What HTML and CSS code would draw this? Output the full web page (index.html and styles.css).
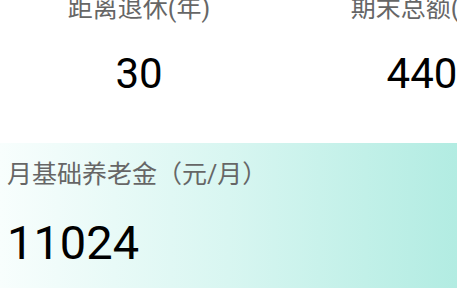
FILE: index.html
```html
<!DOCTYPE html>
<html lang="zh-CN">
<head>
<meta charset="utf-8">
<link rel="stylesheet" href="styles.css">
</head>
<body>
<div class="page">
  <div class="stats">
    <div class="stat stat-left">
      <div class="stat-label">距离退休(年)</div>
      <div class="stat-value">30</div>
    </div>
    <div class="stat stat-right">
      <div class="stat-label">期末总额(元)</div>
      <div class="stat-value">440</div>
    </div>
  </div>
  <div class="card">
    <div class="card-label">月基础养老金（元/月）</div>
    <div class="card-value">11024</div>
  </div>
</div>
</body>
</html>
```

FILE: styles.css
```css
html, body {
  margin: 0;
  padding: 0;
  background: #ffffff;
}
body {
  font-family: Roboto, "Noto Sans CJK SC", sans-serif;
  width: 457px;
  height: 288px;
  overflow: hidden;
}
.page {
  display: flex;
  flex-direction: column;
  width: 457px;
  height: 288px;
  overflow: hidden;
}
.stats {
  display: flex;
  margin-top: -5px;
  height: 148px;
  flex: none;
}
.stat {
  flex: none;
  display: flex;
  flex-direction: column;
  align-items: center;
}
.stat-left { width: 278px; }
.stat-right { width: 288px; }
.stat-label {
  font-size: 25px;
  line-height: 28px;
  color: #666666;
  white-space: nowrap;
}
.stat-value {
  margin-top: 26px;
  font-size: 42px;
  line-height: 50px;
  color: #000000;
}
.card {
  flex: 1;
  background: linear-gradient(to right, #f8fefd 0%, #d8f6f1 50%, #b2ece2 100%);
  padding: 16px 7px 0;
}
.card-label {
  font-size: 25px;
  line-height: 32px;
  color: #666666;
  white-space: nowrap;
}
.card-value {
  margin-top: 24px;
  font-size: 47px;
  line-height: 56px;
  color: #000000;
}
```
